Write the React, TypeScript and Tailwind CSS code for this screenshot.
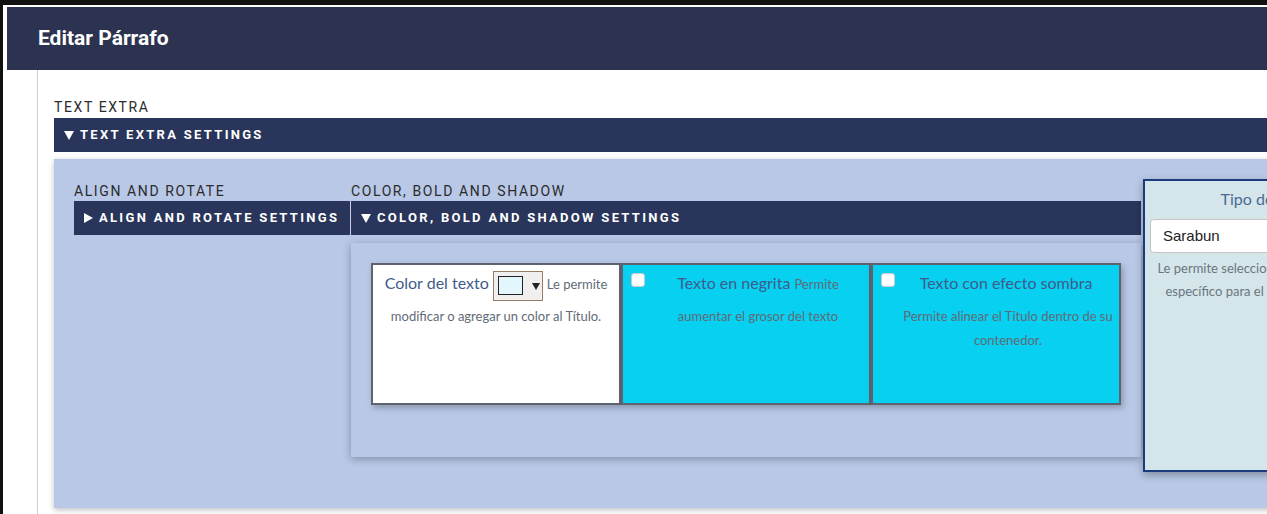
import React from 'react'

const plex = { fontFamily: 'Roboto, "Liberation Sans", sans-serif' }
const body = { fontFamily: 'Lato, "Noto Sans", sans-serif' }

function Caret({ open }: { open: boolean }) {
  return open ? (
    <svg width="10" height="9" viewBox="0 0 10 9" className="shrink-0">
      <path d="M0 0 H10 L5 9 Z" fill="white" />
    </svg>
  ) : (
    <svg width="9" height="10" viewBox="0 0 9 10" className="shrink-0">
      <path d="M0 0 V10 L9 5 Z" fill="white" />
    </svg>
  )
}

function SectionBar({ label, open, className = '' }: { label: string; open: boolean; className?: string }) {
  return (
    <div
      className={`h-[34px] bg-[#29355a] flex items-center gap-[6px] pl-[10px] text-white font-bold text-[13px] tracking-[2.3px] whitespace-nowrap ${className}`}
      style={plex}
    >
      <Caret open={open} />
      <span>{label}</span>
    </div>
  )
}

function Label({ children }: { children: React.ReactNode }) {
  return (
    <div className="text-[14px] leading-[20px] tracking-[1.6px] text-[#2b2b2b] whitespace-nowrap" style={plex}>
      {children}
    </div>
  )
}

// cards share the same box; the two option cards leave room for the checkbox on the left
function OptionCard({ title, text }: { title: string; text: string }) {
  return (
    <div
      className="relative w-[250px] h-[142px] shrink-0 border-2 border-[#5f6370] bg-[#08d0f0] pl-[28px] pr-[4px] shadow-[2px_3px_6px_rgba(0,0,0,0.25)]"
      style={body}
    >
      <span className="absolute left-[8px] top-[8px] w-[14px] h-[14px] rounded-[3px] bg-white border border-[#c9c9c9]" />
      <p className="text-center text-[13px] leading-[24px] text-[#5f6b76]">
        <span className="inline-block text-[16px] leading-[24px] pt-[6px] pb-[9px] text-[#3f5b8c] mr-[4px]">{title}</span>
        {text}
      </p>
    </div>
  )
}

function ColorCard() {
  return (
    <div
      className="w-[250px] h-[142px] shrink-0 bg-white border-2 border-[#5f6370] px-[4px] shadow-[2px_3px_6px_rgba(0,0,0,0.25)]"
      style={body}
    >
      <p className="text-center text-[13px] leading-[24px] text-[#5f6b76]">
        <span className="inline-block text-[16px] leading-[24px] pt-[6px] pb-[9px] text-[#3f5b8c] mr-[4px]">Color del texto</span>
        <span className="inline-flex items-center align-middle gap-[9px] w-[50px] h-[30px] pl-[4px] border border-[#9a7c64] bg-[#efefef] mr-[4px]">
          <span className="w-[25px] h-[19px] bg-[#e3f6fb] border border-[#222]" />
          <svg width="8" height="8" viewBox="0 0 8 8">
            <path d="M0 1 H8 L4 8 Z" fill="#222" />
          </svg>
        </span>
        Le permite modificar o agregar un color al Título.
      </p>
    </div>
  )
}

export default function App() {
  return (
    <div className="w-[1267px] h-[514px] overflow-hidden bg-[#111] pt-[5px] pl-[3px]">
      <div className="h-full bg-white pt-[2px] pl-[4px] flex flex-col">
        <div className="h-[63px] shrink-0 bg-[#2c3350] flex items-center pl-[31px]">
          <h1 className="text-white font-bold text-[21px]" style={plex}>
            Editar Párrafo
          </h1>
        </div>

        <div className="flex-1 ml-[30px] border-l border-[#cfcfcf] pl-[16px] pt-[27px]">
          <Label>TEXT EXTRA</Label>
          <SectionBar label="TEXT EXTRA SETTINGS" open className="mt-[1px] w-[1300px]" />

          <div className="mt-[7px] w-[1300px] h-[349px] bg-[#b8c8e6] shadow-[0_2px_6px_rgba(0,0,0,0.25)] pl-[20px] pt-[20px] flex items-start">
            <div className="w-[276px] shrink-0 pt-[2px]">
              <Label>ALIGN AND ROTATE</Label>
              <SectionBar label="ALIGN AND ROTATE SETTINGS" open={false} />
            </div>

            <div className="w-[791px] shrink-0 pt-[2px]">
              <div className="pl-[1px]">
                <Label>COLOR, BOLD AND SHADOW</Label>
              </div>
              <SectionBar label="COLOR, BOLD AND SHADOW SETTINGS" open className="border-l border-[#c9d2e6]" />
              <div className="mt-[8px] ml-[1px] h-[214px] bg-[#b8c8e6] shadow-[0_2px_8px_rgba(0,0,0,0.3)] pl-[20px] pt-[20px] flex">
                <ColorCard />
                <OptionCard title="Texto en negrita" text="Permite aumentar el grosor del texto" />
                <OptionCard title="Texto con efecto sombra" text="Permite alinear el Titulo dentro de su contenedor." />
              </div>
            </div>

            <div
              className="ml-[2px] w-[258px] h-[293px] shrink-0 bg-[#d4e6ea] border-2 border-[#1c3a7e] shadow-[0_3px_8px_rgba(0,0,0,0.3)] px-[4px] pt-[6px]"
              style={body}
            >
              <div className="text-center text-[16px] leading-[24px] text-[#4a6a94]">Tipo de fuente</div>
              <div
                className="mt-[8px] ml-[1px] h-[34px] bg-white border border-[#c4c4c4] rounded-[4px] flex items-center pl-[12px] text-[15px] text-[#222]"
                style={{ fontFamily: '"Liberation Sans", Arial, sans-serif' }}
              >
                Sarabun
              </div>
              <p className="mt-[4px] text-center text-[13px] leading-[23px] text-[#6b7580]">
                Le permite seleccionar un tipo de fuente específico para el texto de su Párrafo.
              </p>
            </div>
          </div>
        </div>
      </div>
    </div>
  )
}
